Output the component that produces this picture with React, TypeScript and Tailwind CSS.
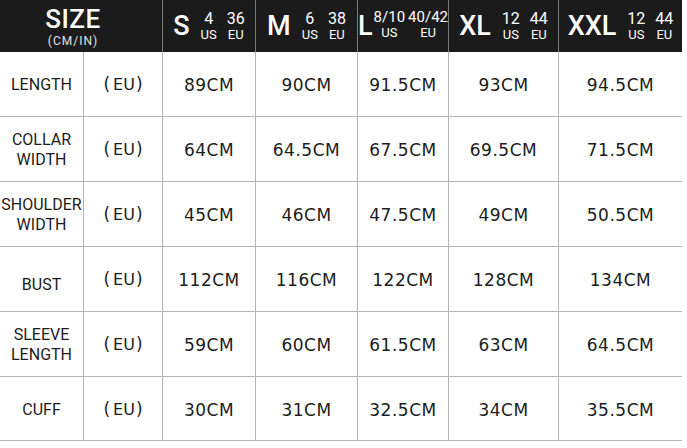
import React from "react";

const cols = "grid-cols-[83px_79px_93px_102px_91px_110px_124px]";

type Head = { big: string; a: string; b: string; tight?: boolean };
const heads: Head[] = [
  { big: "S", a: "4", b: "36" },
  { big: "M", a: "6", b: "38" },
  { big: "L", a: "8/10", b: "40/42", tight: true },
  { big: "XL", a: "12", b: "44" },
  { big: "XXL", a: "12", b: "44" },
];

const rows: { label: string[]; vals: string[]; low?: boolean }[] = [
  { label: ["LENGTH"], vals: ["89CM", "90CM", "91.5CM", "93CM", "94.5CM"] },
  { label: ["COLLAR", "WIDTH"], vals: ["64CM", "64.5CM", "67.5CM", "69.5CM", "71.5CM"] },
  { label: ["SHOULDER", "WIDTH"], vals: ["45CM", "46CM", "47.5CM", "49CM", "50.5CM"] },
  { label: ["BUST"], vals: ["112CM", "116CM", "122CM", "128CM", "134CM"], low: true },
  { label: ["SLEEVE", "LENGTH"], vals: ["59CM", "60CM", "61.5CM", "63CM", "64.5CM"] },
  { label: ["CUFF"], vals: ["30CM", "31CM", "32.5CM", "34CM", "35.5CM"] },
];

function Group({ top, bottom, small }: { top: string; bottom: string; small?: boolean }) {
  return (
    <div className="flex flex-col items-center">
      <span className={small ? "text-[15px] leading-[16px]" : "text-[16px] leading-[16px]"}>{top}</span>
      <span className="text-[13px] leading-[13px] mt-[1px]">{bottom}</span>
    </div>
  );
}

export default function App() {
  return (
    <div className="w-[687px] h-[448px] bg-white overflow-hidden" style={{ fontFamily: "Roboto, 'DejaVu Sans', sans-serif" }}>
      <div className="w-[682px]">
        <div className={`grid ${cols} h-[52px] bg-[#1b1b1b] text-white`}>
          <div className="col-span-2 flex flex-col items-center justify-center pr-[16px]">
            <span className="text-[26px] leading-[27px] font-medium tracking-[0.5px] mt-[2px]">SIZE</span>
            <span className="text-[12px] leading-[13px] tracking-[1px] text-[#e0e0e0] mt-[2px]">(CM/IN)</span>
          </div>
          {heads.map((h) => (
            <div key={h.big} className="border-l border-[#7a7a7a] flex items-center justify-center">
              <span className="text-[27px] leading-none font-medium">{h.big}</span>
              <div className={h.tight ? "ml-[1px] flex gap-[3px] -mt-[4px]" : "ml-[11px] flex gap-[10px]"}>
                <Group top={h.a} bottom="US" small={h.tight} />
                <Group top={h.b} bottom="EU" small={h.tight} />
              </div>
            </div>
          ))}
        </div>
        {rows.map((r, i) => (
          <div key={i} className={`grid ${cols} ${i === rows.length - 1 ? "h-[64px]" : "h-[65px]"} border-b border-[#b4b4b4] text-[#1c1c1c]`}>
            <div className={`flex flex-col items-center justify-center text-[16px] leading-[20px] ${r.low ? "pt-[12px]" : "pt-[2px]"}`}>
              {r.label.map((l) => (
                <span key={l}>{l}</span>
              ))}
            </div>
            <div className="border-l border-[#b4b4b4] flex items-center justify-center pt-[2px]" style={{ fontFamily: "'DejaVu Sans', sans-serif" }}>
              <span className="text-[17px] mr-[3px]">(</span>
              <span className="text-[16px]">EU</span>
              <span className="text-[17px] ml-[1px]">)</span>
            </div>
            {r.vals.map((v, j) => (
              <div key={j} className="border-l border-[#b4b4b4] flex items-center justify-center text-[17px] tracking-[0.5px] pt-[4px]" style={{ fontFamily: "'DejaVu Sans', sans-serif" }}>
                {v}
              </div>
            ))}
          </div>
        ))}
      </div>
    </div>
  );
}
